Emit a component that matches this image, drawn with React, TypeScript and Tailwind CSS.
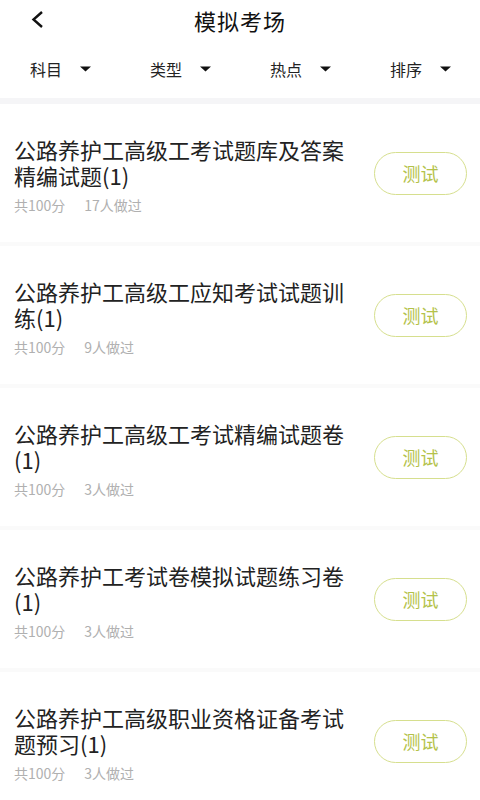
import { useState } from 'react';

interface Exam {
  title: string;
  score: number;
  done: number;
}

const filters = ['科目', '类型', '热点', '排序'];

const exams: Exam[] = [
  { title: '公路养护工高级工考试题库及答案精编试题(1)', score: 100, done: 17 },
  { title: '公路养护工高级工应知考试试题训练(1)', score: 100, done: 9 },
  { title: '公路养护工高级工考试精编试题卷(1)', score: 100, done: 3 },
  { title: '公路养护工考试卷模拟试题练习卷(1)', score: 100, done: 3 },
  { title: '公路养护工高级职业资格证备考试题预习(1)', score: 100, done: 3 },
];

function Caret() {
  return (
    <svg width="11" height="6" viewBox="0 0 11 6" className="ml-[18px]">
      <path d="M0 0.5 H11 L5.5 5.5 Z" fill="#111" />
    </svg>
  );
}

export default function App() {
  const [active, setActive] = useState<number | null>(null);

  return (
    <div
      className="w-[480px] h-[800px] overflow-hidden bg-[#fafafa] text-[#222]"
      style={{ fontFamily: '"Noto Sans CJK SC", "Noto Sans", sans-serif' }}
    >
      <div className="bg-white">
        <div className="relative h-[40px] flex items-center justify-center">
          <button className="absolute left-[30px] top-[11px]">
            <svg width="16" height="17" viewBox="0 0 16 17">
              <path d="M12 1 L3.5 8.5 L12 16" fill="none" stroke="#111" strokeWidth="2.4" strokeLinejoin="miter" />
            </svg>
          </button>
          <h1 className="text-[22px] leading-none text-[#111] tracking-[1px]">模拟考场</h1>
        </div>
        <div className="grid grid-cols-4 h-[58px] items-center">
          {filters.map((f, i) => (
            <button
              key={f}
              onClick={() => setActive(active === i ? null : i)}
              className="flex items-center pl-[30px] text-[16px] text-[#222]"
            >
              {f}
              <Caret />
            </button>
          ))}
        </div>
      </div>

      <div className="h-[6px] bg-[#f5f5f7]" />

      <div className="flex flex-col gap-[4px]">
        {exams.map((e, i) => (
          <div key={i} className="h-[138px] bg-white flex items-center pl-[14px] pr-[13px]">
            <div className="w-[348px] pt-[4px]">
              <div className="text-[22px] leading-[26px] text-[#222]">{e.title}</div>
              <div className="mt-[8px] flex text-[14px] leading-[19px] text-[#b0b0b0]">
                <span>共{e.score}分</span>
                <span className="ml-[19px]">{e.done}人做过</span>
              </div>
            </div>
            <button className="ml-auto w-[93px] h-[43px] rounded-full border-[1.5px] border-[#d6df8e] text-[#b4c24a] text-[18px]">
              测试
            </button>
          </div>
        ))}
      </div>
    </div>
  );
}
